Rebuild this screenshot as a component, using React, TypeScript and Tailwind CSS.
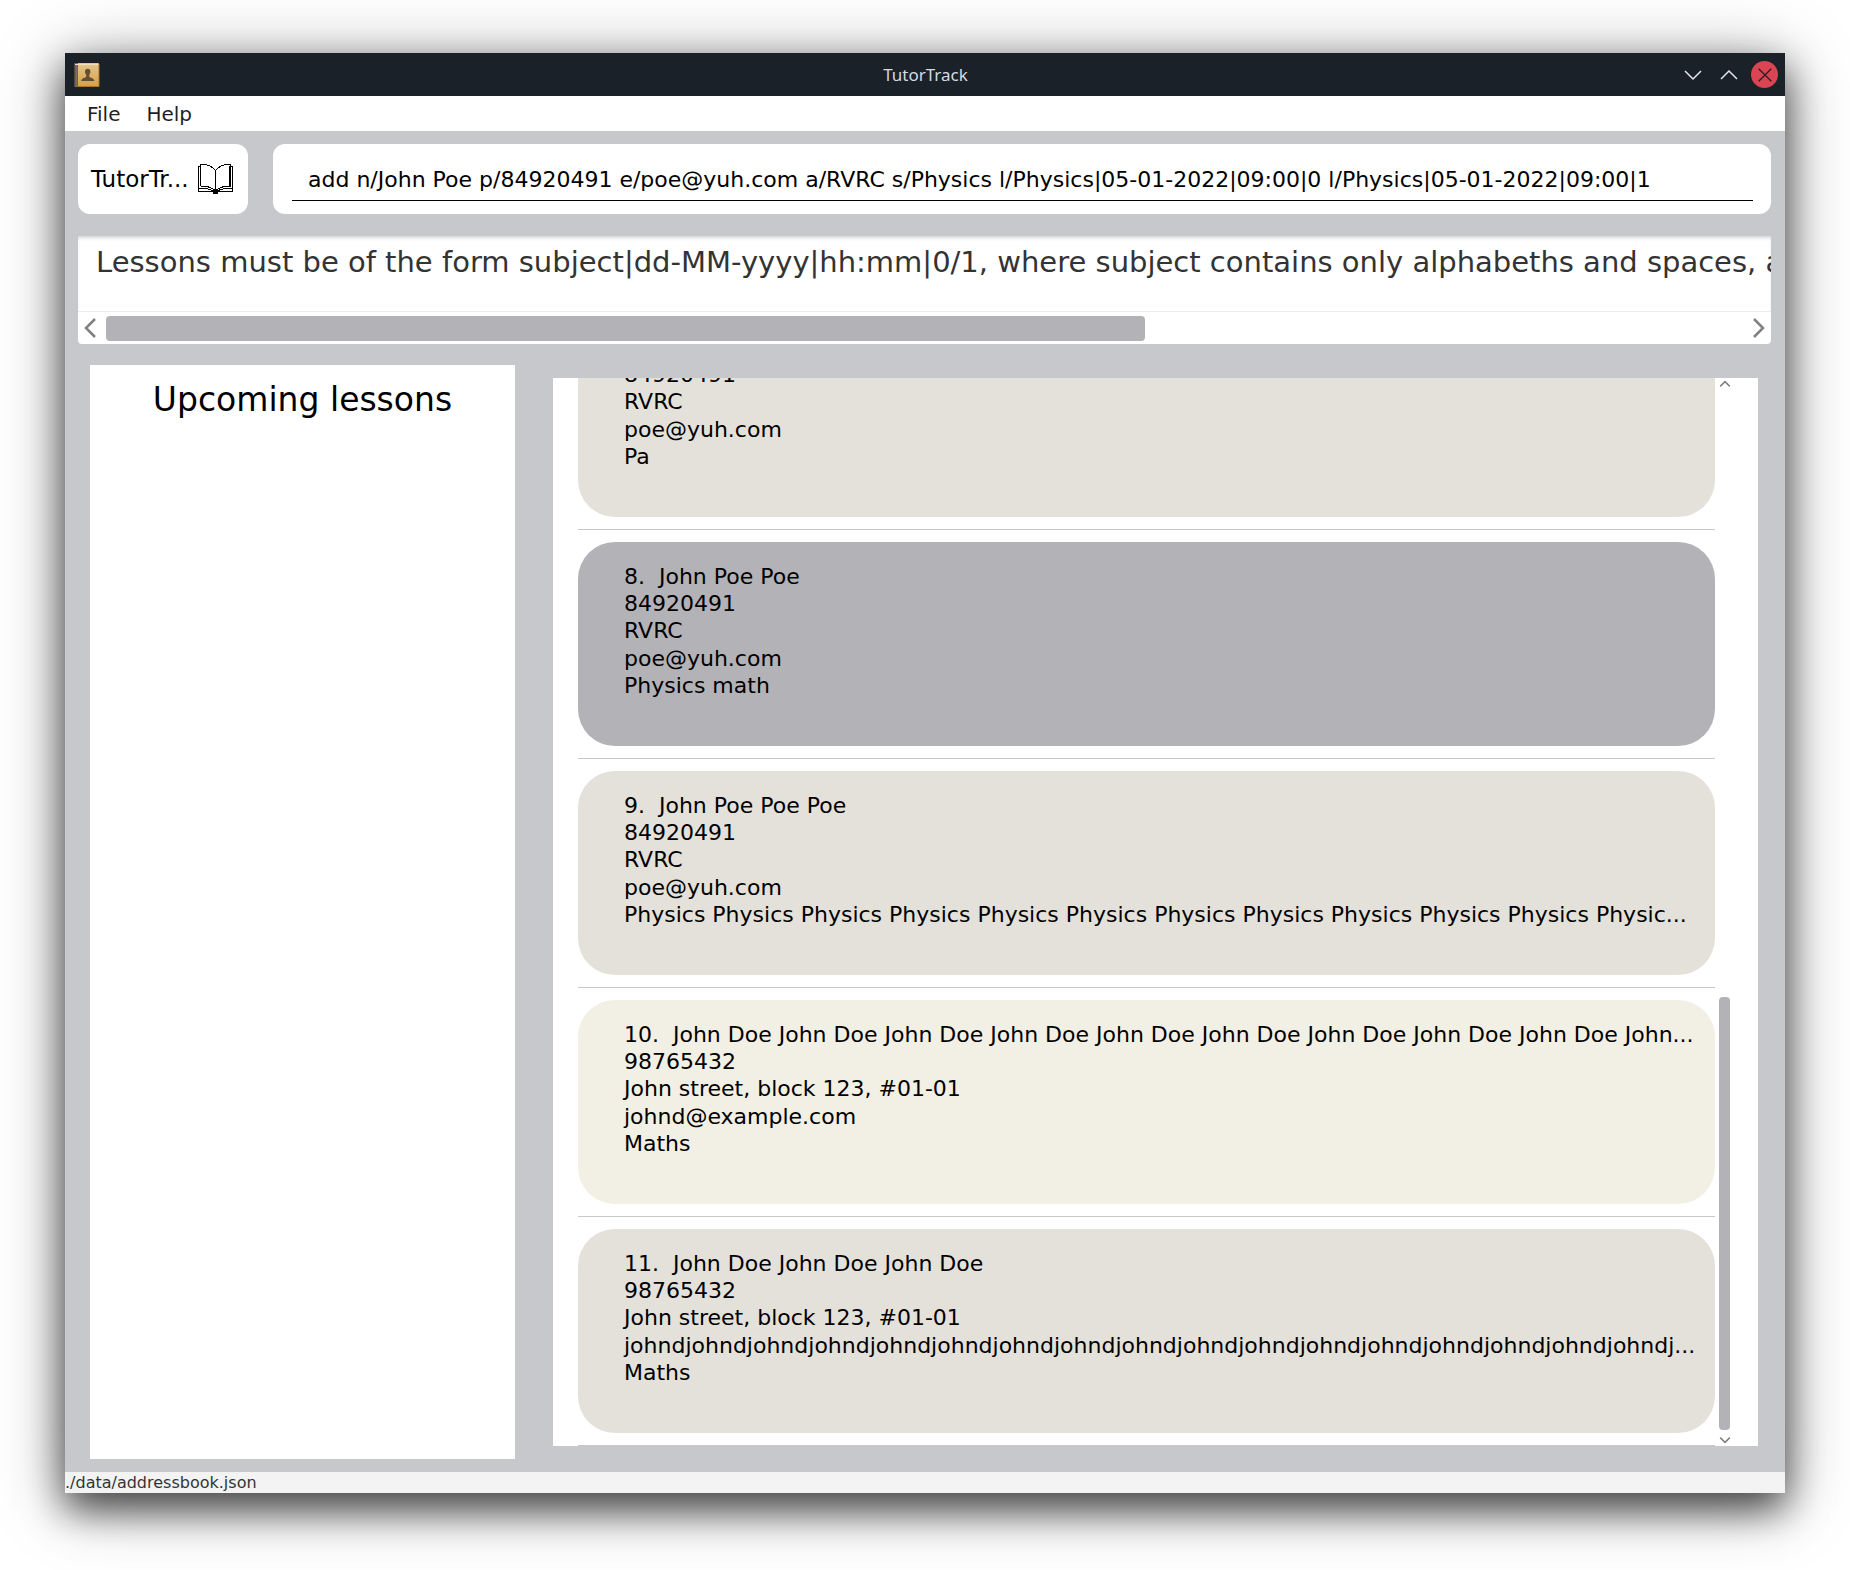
import React from "react";

type Tone = "stone" | "selected" | "cream";

interface Person {
  id: number;
  title: string;
  phone: string;
  address: string;
  email: string;
  subjects: string;
  tone: Tone;
}

const people: Person[] = [
  { id: 7, title: "", phone: "84920491", address: "RVRC", email: "poe@yuh.com", subjects: "Pa", tone: "stone" },
  { id: 8, title: "8.  John Poe Poe", phone: "84920491", address: "RVRC", email: "poe@yuh.com", subjects: "Physics math", tone: "selected" },
  {
    id: 9,
    title: "9.  John Poe Poe Poe",
    phone: "84920491",
    address: "RVRC",
    email: "poe@yuh.com",
    subjects: "Physics Physics Physics Physics Physics Physics Physics Physics Physics Physics Physics Physic...",
    tone: "stone",
  },
  {
    id: 10,
    title: "10.  John Doe John Doe John Doe John Doe John Doe John Doe John Doe John Doe John Doe John...",
    phone: "98765432",
    address: "John street, block 123, #01-01",
    email: "johnd@example.com",
    subjects: "Maths",
    tone: "cream",
  },
  {
    id: 11,
    title: "11.  John Doe John Doe John Doe",
    phone: "98765432",
    address: "John street, block 123, #01-01",
    email: "johndjohndjohndjohndjohndjohndjohndjohndjohndjohndjohndjohndjohndjohndjohndjohndjohndj...",
    subjects: "Maths",
    tone: "stone",
  },
];

const toneClass: Record<Tone, string> = {
  stone: "bg-[#e4e1da]",
  selected: "bg-[#b3b2b7]",
  cream: "bg-[#f2efe4]",
};

function AppIcon() {
  return (
    <svg width="28" height="26" viewBox="0 0 28 26" aria-hidden="true">
      <defs>
        <linearGradient id="cover" x1="0" y1="0" x2="0" y2="1">
          <stop offset="0" stopColor="#e3c68d" />
          <stop offset="1" stopColor="#d79f42" />
        </linearGradient>
        <linearGradient id="spine" x1="0" y1="0" x2="1" y2="0">
          <stop offset="0" stopColor="#4a3f3c" />
          <stop offset="0.6" stopColor="#85706a" />
          <stop offset="1" stopColor="#6b5545" />
        </linearGradient>
      </defs>
      <rect x="1" y="1" width="25" height="24" rx="1" fill="url(#cover)" />
      <rect x="1" y="1" width="4" height="24" fill="url(#spine)" />
      <rect x="2" y="2" width="24" height="1" fill="#f0e0bc" />
      <path d="M5 24.500h21V2" fill="none" stroke="#a87624" />
      <path d="M12 9.500c0-1.800 1-2.800 2.700-2.800s2.700 1 2.700 2.800c0 1.500-.5 2.500-1.100 3.200v2.100c0 .8 5.100 1.300 5.100 4.200H8.200c0-2.900 5-3.400 5-4.200v-2.100c-.7-.7-1.200-1.700-1.200-3.200z" fill="#644f33" />
    </svg>
  );
}

function BookIcon() {
  return (
    <svg width="35" height="30" viewBox="0 0 35 30" fill="none" stroke="#000" shapeRendering="crispEdges" aria-hidden="true">
      <path d="M2.500 22V1C8-.5 14 2 17.500 6.500 21 2 27-.5 32.500 1v21" />
      <path d="M17.500 6.500V28" />
      <path d="M2.500 2.500h-2V27M32.500 2.500h2V27" />
      <path d="M31.500 1.500V22" strokeWidth="2" />
      <path d="M2.500 22c6 0 12 1.500 15 5 3-3.500 9-5 15-5" />
      <path d="M1 25c7-1 12 0 16.500 3C22 25 27 24 34 25" />
      <path d="M0 27.500h35" strokeWidth="1.500" />
      <path d="M15 28h5" strokeWidth="3" />
    </svg>
  );
}

function Chevron({ d, size, color, stroke }: { d: string; size: number; color: string; stroke: number }) {
  return (
    <svg width={size} height={size} viewBox="0 0 20 20" fill="none" stroke={color} strokeWidth={stroke} aria-hidden="true">
      <path d={d} />
    </svg>
  );
}

function TitleBar() {
  return (
    <header className="grid h-[43px] shrink-0 grid-cols-[1fr_auto_1fr] items-center bg-[#1b2128] pr-[7px] pl-2">
      <AppIcon />
      <h1 className="font-['Noto_Sans',sans-serif] text-[17px] text-[#d3dae3]">TutorTrack</h1>
      <div className="flex items-center justify-end gap-[9px]">
        <button type="button" aria-label="Minimize" className="flex size-[27px] items-center justify-center">
          <Chevron d="M2 6l8 8 8-8" size={20} color="#e3e8ee" stroke={1.5} />
        </button>
        <button type="button" aria-label="Maximize" className="flex size-[27px] items-center justify-center">
          <Chevron d="M2 14l8-8 8 8" size={20} color="#e3e8ee" stroke={1.5} />
        </button>
        <button type="button" aria-label="Close" className="flex size-[27px] items-center justify-center rounded-full bg-[#da4453]">
          <Chevron d="M3 3l14 14M17 3L3 17" size={18} color="#2a2027" stroke={1.5} />
        </button>
      </div>
    </header>
  );
}

function MenuBar() {
  return (
    <nav aria-label="Main menu" className="flex h-[35px] shrink-0 items-center gap-[26px] bg-white pl-[22px] text-xl text-[#1f1f1f]">
      <button type="button">File</button>
      <button type="button">Help</button>
    </nav>
  );
}

function ResultDisplay() {
  return (
    <section aria-label="Result" className="mt-[22px] mr-[14px] ml-[13px] shrink-0 rounded-b bg-white">
      <textarea
        readOnly
        wrap="off"
        aria-label="Command result"
        className="block h-[76px] w-full resize-none overflow-hidden border-b border-[#ececec] pt-2 pl-[18px] text-[29px] leading-9 text-[#333] shadow-[inset_0_3px_4px_-2px_#c4c4c4] outline-none"
        value="Lessons must be of the form subject|dd-MM-yyyy|hh:mm|0/1, where subject contains only alphabeths and spaces, a"
      />
      <div className="flex h-8 items-center justify-between">
        <button type="button" aria-label="Scroll left" className="w-7 pl-1">
          <Chevron d="M13 1l-9 9 9 9" size={20} color="#808080" stroke={2.5} />
        </button>
        <div className="flex-1">
          <div className="h-[25px] w-[63.3%] rounded bg-[#b3b2b7]" />
        </div>
        <button type="button" aria-label="Scroll right" className="w-6">
          <Chevron d="M7 1l9 9-9 9" size={20} color="#808080" stroke={2.5} />
        </button>
      </div>
    </section>
  );
}

function PersonRow({ person }: { person: Person }) {
  return (
    <li className="shrink-0 border-b border-[#c7c8cc] py-3">
      <article className={`h-[204px] overflow-hidden rounded-[37px] pt-[21px] pl-[46px] text-[22px] leading-[27px] whitespace-pre ${toneClass[person.tone]}`}>
        <h3 className="min-h-[27px]">{person.title}</h3>
        <p>{person.phone}</p>
        <p>{person.address}</p>
        <p className="pt-px">{person.email}</p>
        <p>{person.subjects}</p>
      </article>
    </li>
  );
}

function PersonList() {
  return (
    <section aria-label="Students" className="my-[13px] flex min-w-0 flex-1 bg-white pl-[25px]">
      <ul className="flex min-w-0 flex-1 flex-col justify-end overflow-hidden">
        {people.map((person) => (
          <PersonRow key={person.id} person={person} />
        ))}
      </ul>
      <div className="mr-6 flex w-[19px] flex-col items-center">
        <button type="button" aria-label="Scroll up" className="h-3">
          <Chevron d="M2 14l8-8 8 8" size={12} color="#808080" stroke={2.5} />
        </button>
        <div className="flex w-[11px] flex-1 flex-col justify-end pb-1">
          <div className="h-[41.6%] rounded bg-[#b3b2b7]" />
        </div>
        <button type="button" aria-label="Scroll down" className="h-3">
          <Chevron d="M2 6l8 8 8-8" size={12} color="#808080" stroke={2.5} />
        </button>
      </div>
    </section>
  );
}

export default function App() {
  return (
    <div className="flex h-screen flex-col overflow-hidden bg-white px-[65px] pt-[53px] pb-[77px] font-['DejaVu_Sans',sans-serif] text-black">
      <div className="flex min-h-0 flex-1 flex-col bg-[#c7c8cc] shadow-[0_16px_36px_rgba(0,0,0,0.65),0_8px_64px_rgba(0,0,0,0.35)]">
        <TitleBar />
        <MenuBar />
        <main className="flex min-h-0 flex-1 flex-col">
          <div className="mt-[13px] mr-[14px] ml-[13px] flex h-[70px] shrink-0 gap-[25px]">
            <div className="flex w-[170px] shrink-0 items-center justify-between rounded-xl bg-white pr-[15px] pl-[13px]">
              <span className="text-[23px]">TutorTr...</span>
              <BookIcon />
            </div>
            <div className="flex min-w-0 flex-1 items-end rounded-xl bg-white pr-[18px] pb-[13px] pl-[19px]">
              <input
                type="text"
                aria-label="Command"
                className="h-[42px] w-full border-b border-black pl-4 text-[22px] outline-none"
                defaultValue="add n/John Poe p/84920491 e/poe@yuh.com a/RVRC s/Physics l/Physics|05-01-2022|09:00|0 l/Physics|05-01-2022|09:00|1"
              />
            </div>
          </div>
          <ResultDisplay />
          <div className="mt-[21px] mr-[27px] mb-[13px] ml-[25px] flex min-h-0 flex-1 gap-[38px]">
            <section className="w-[425px] shrink-0 bg-white pt-[15px] text-center">
              <h2 className="text-[33px] leading-10">Upcoming lessons</h2>
            </section>
            <PersonList />
          </div>
        </main>
        <footer className="h-[21px] shrink-0 bg-[#f3f3f3] text-base leading-[21px] text-[#333]">./data/addressbook.json</footer>
      </div>
    </div>
  );
}
